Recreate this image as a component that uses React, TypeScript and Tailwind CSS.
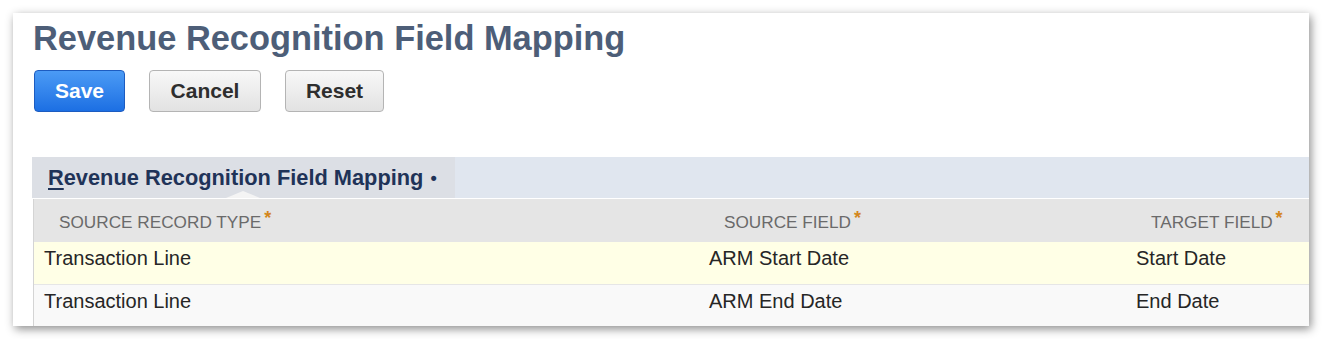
const font = { fontFamily: '"Liberation Sans", Arial, sans-serif' };

function Req() {
    return <span className="relative -top-[4px] ml-[3px] text-[18px] font-bold text-[#d4871c]">*</span>;
}

const rows = [
    { type: 'Transaction Line', source: 'ARM Start Date', target: 'Start Date', bg: 'bg-[#ffffe6]' },
    { type: 'Transaction Line', source: 'ARM End Date', target: 'End Date', bg: 'bg-[#f9f9f9]' },
];

export default function App() {
    return (
        <div className="w-[1322px] h-[339px] bg-white p-[13px]" style={font}>
            <div className="w-[1296px] h-[313px] bg-white overflow-hidden pl-[19px] pt-[5px] shadow-[2px_3px_9px_rgba(0,0,0,0.45)]">
                <h1 className="text-[34.4px] leading-[40px] font-bold text-[#4d5e78] ml-px">Revenue Recognition Field Mapping</h1>

                {/* action buttons */}
                <div className="flex gap-6 mt-3 ml-[2px]">
                    <button className="w-[91px] h-[42px] rounded-[4px] border border-[#1d5cc0] bg-gradient-to-b from-[#4b9bf5] to-[#1c6fe3] text-white text-[21px] font-bold">Save</button>
                    <button className="w-[112px] h-[42px] rounded-[4px] border border-[#b4b4b4] bg-gradient-to-b from-[#f8f8f8] to-[#e2e2e2] text-[#2e2e2e] text-[21px] font-bold">Cancel</button>
                    <button className="w-[99px] h-[42px] rounded-[4px] border border-[#b4b4b4] bg-gradient-to-b from-[#f8f8f8] to-[#e2e2e2] text-[#2e2e2e] text-[21px] font-bold">Reset</button>
                </div>

                {/* sublist tab bar */}
                <div className="mt-[45px] h-[41px] flex bg-[#e0e6ef]">
                    <div className="relative w-[423px] h-full bg-[#dcdfe5] pl-4 pt-[2px] flex items-center text-[21.8px] font-bold text-[#1f3358]">
                        <span><span className="underline underline-offset-[3px] decoration-[1.5px]">R</span>evenue Recognition Field Mapping</span>
                        <span className="ml-[7px] text-[18px]">•</span>
                        <div className="absolute left-[194px] bottom-0 w-0 h-0 border-l-[17px] border-r-[17px] border-b-[7px] border-l-transparent border-r-transparent border-b-[#f4f4f4]" />
                    </div>
                </div>

                {/* table */}
                <div className="mt-px ml-px border-l border-[#d4d4d4]">
                    <div className="grid grid-cols-[666px_427px_1fr] h-[43px] pt-[3px] items-center bg-[#e5e5e5] text-[17.2px] text-[#6a6a6a] uppercase">
                        <div className="pl-[25px]">Source Record Type<Req /></div>
                        <div className="pl-[24px]">Source Field<Req /></div>
                        <div className="pl-[24px]">Target Field<Req /></div>
                    </div>
                    {rows.map((r, i) => (
                        <div key={i} className={`grid grid-cols-[666px_427px_1fr] h-[43px] pt-[4px] text-[20px] leading-[24px] text-[#262626] border-b border-[#e6e6e6] ${r.bg}`}>
                            <div className="pl-[10px]">{r.type}</div>
                            <div className="pl-[9px]">{r.source}</div>
                            <div className="pl-[9px]">{r.target}</div>
                        </div>
                    ))}
                </div>
            </div>
        </div>
    );
}
